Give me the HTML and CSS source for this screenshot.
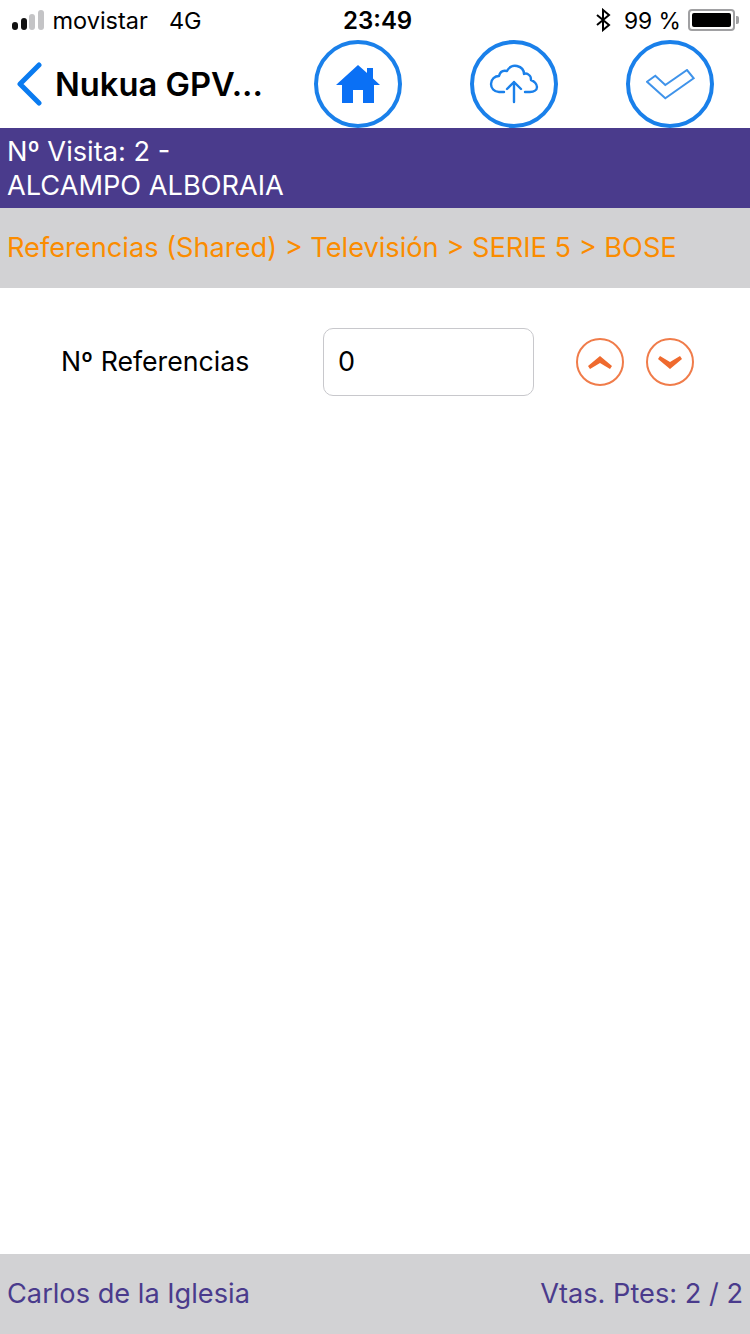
FILE: index.html
```html
<!DOCTYPE html>
<html lang="en">
<head>
  <meta charset="UTF-8" />
  <meta name="viewport" content="width=device-width, initial-scale=1.0"/>
  <title>Nukua GPV</title>
  <link rel="stylesheet" href="styles.css">
</head>
<body>
  <div class="status-bar">
    <div class="status-left">
      <span class="signal">
        <i class="on s1"></i><i class="on s2"></i><i class="s3"></i><i class="s4"></i>
      </span>
      <span class="carrier">movistar</span>
      <span class="network">4G</span>
    </div>
    <div class="clock">23:49</div>
    <div class="status-right">
      <svg class="bt" width="15" height="24" viewBox="0 0 15 24">
        <path d="M1 7l12 10-6 5V2l6 5L1 17" fill="none" stroke="#000" stroke-width="2"/>
      </svg>
      <span class="percent">99 %</span>
      <span class="battery"><span class="battery-fill"></span></span>
      <span class="battery-tip"></span>
    </div>
  </div>

  <header class="nav">
    <div class="nav-left">
      <svg class="back" width="26" height="44" viewBox="0 0 26 44">
        <path d="M23 3L4 22l19 19" fill="none" stroke="#0a7bf0" stroke-width="5" stroke-linecap="round" stroke-linejoin="round"/>
      </svg>
      <span class="nav-title">Nukua GPV...</span>
    </div>
    <div class="nav-icons">
      <div class="circle-btn">
        <svg width="46" height="40" viewBox="0 0 46 40">
          <path d="M23 1L1 21h6v18h11V26h10v13h11V21h6l-7-6.400V4h-6v5z" fill="#0a70f5"/>
        </svg>
      </div>
      <div class="circle-btn">
        <svg width="50" height="40" viewBox="0 0 50 40" fill="none" stroke="#1a80ea" stroke-width="2.400" stroke-linecap="round" stroke-linejoin="round">
          <path d="M15 28H10C5 28 2 24 2 20c0-5 4-8 8-8 1-4 4-6 8-5 2-4 6-6 10-5 4 1 7 4 7 8 2-1 4 0 5 1 2 1 2 3 2 5 3 1 6 4 6 7 0 3-3 5-7 5h-5"/>
          <path d="M25 38V18M18 25l7-7 7 7"/>
        </svg>
      </div>
      <div class="circle-btn">
        <svg width="49" height="31" viewBox="0 0 49 31" fill="none" stroke="#3f93ea" stroke-width="2">
          <path d="M1 12.700L9.300 6.700 19.300 16 41 1l6.700 8.300-28.400 20z"/>
        </svg>
      </div>
    </div>
  </header>

  <div class="visit-bar">
    <div>Nº Visita: 2 -</div>
    <div>ALCAMPO ALBORAIA</div>
  </div>

  <div class="crumb-bar">Referencias (Shared) &gt; Televisión &gt; SERIE 5 &gt; BOSE</div>

  <main class="main-content">
    <div class="field-row">
      <label class="field-label">Nº Referencias</label>
      <div class="field-input">0</div>
      <div class="stepper">
        <div class="step-btn">
          <svg width="24" height="15" viewBox="0 0 24 15"><path d="M12 1l12 10-2 3-10-6-10 6-2-3z" fill="#ef6a2e"/></svg>
        </div>
        <div class="step-btn">
          <svg width="24" height="15" viewBox="0 0 24 15"><path d="M12 14L24 4l-2-3-10 6L2 1 0 4z" fill="#ef6a2e"/></svg>
        </div>
      </div>
    </div>
  </main>

  <footer class="footer">
    <span>Carlos de la Iglesia</span>
    <span>Vtas. Ptes: 2 / 2</span>
  </footer>
</body>
</html>
```

FILE: styles.css
```css
html, body {
  height: 100%;
}

body {
  margin: 0;
  display: flex;
  flex-direction: column;
  height: 1334px;
  overflow: hidden;
  background: #fff;
  color: #000;
  font-family: Inter, "Liberation Sans", sans-serif;
}

.status-bar {
  height: 40px;
  flex: none;
  display: flex;
  align-items: center;
  justify-content: space-between;
  position: relative;
  padding: 0 11px 0 12px;
  font-size: 23.500px;
}

.status-left {
  display: flex;
  align-items: center;
}

.signal {
  display: flex;
  align-items: flex-end;
  gap: 2.500px;
  margin-right: 9px;
}

.signal i {
  display: block;
  width: 6px;
  border-radius: 3px;
  background: #c4c4c6;
}

.signal .on {
  background: #111;
}

.s1 { height: 8px; }
.s2 { height: 12px; }
.s3 { height: 16px; }
.s4 { height: 20px; }

.network {
  margin-left: 21px;
}

.clock {
  position: absolute;
  left: 343px;
  font-size: 24px;
  font-weight: 600;
}

.status-right {
  display: flex;
  align-items: center;
}

.percent {
  margin-left: 13px;
  font-size: 22.800px;
}

.battery {
  display: block;
  box-sizing: border-box;
  width: 47px;
  height: 22px;
  margin-left: 7px;
  padding: 2px;
  border: 2px solid #a0a0a2;
  border-radius: 4px;
}

.battery-fill {
  display: block;
  height: 100%;
  background: #000;
  border-radius: 2px;
}

.battery-tip {
  display: block;
  width: 3px;
  height: 8px;
  margin-left: 1px;
  background: #a0a0a2;
  border-radius: 0 2px 2px 0;
}

.nav {
  height: 88px;
  flex: none;
  display: flex;
  align-items: center;
  justify-content: space-between;
}

.nav-left {
  display: flex;
  align-items: center;
  padding-left: 16px;
}

.nav-title {
  margin-left: 13px;
  font-size: 32.700px;
  font-weight: 600;
}

.nav-icons {
  display: flex;
  gap: 68px;
  padding-right: 36px;
}

.circle-btn {
  box-sizing: border-box;
  width: 88px;
  height: 88px;
  border: 4px solid #1a80ea;
  border-radius: 50%;
  display: flex;
  align-items: center;
  justify-content: center;
}

.visit-bar {
  height: 80px;
  flex: none;
  box-sizing: border-box;
  padding: 7px 7px 0;
  background: #4a3b8c;
  color: #fff;
  font-size: 27.200px;
  line-height: 34px;
}

.crumb-bar {
  height: 80px;
  flex: none;
  box-sizing: border-box;
  display: flex;
  align-items: center;
  padding: 0 7px 2px;
  background: #d2d2d4;
  color: #fb8c00;
  font-size: 27.200px;
}

.main-content {
  flex: 1;
  padding-top: 40px;
  background: #fff;
}

.field-row {
  display: flex;
  align-items: center;
}

.field-label {
  flex: none;
  width: 323px;
  padding: 0 0 2px 61px;
  box-sizing: border-box;
  font-size: 26.700px;
}

.field-input {
  box-sizing: border-box;
  flex: none;
  width: 211px;
  height: 68px;
  padding: 0 0 2px 14px;
  display: flex;
  align-items: center;
  border: 1px solid #c8c8cc;
  border-radius: 10px;
  font-size: 27px;
}

.stepper {
  display: flex;
  gap: 22px;
  margin-left: 42px;
}

.step-btn {
  box-sizing: border-box;
  width: 48px;
  height: 48px;
  border: 2.500px solid #f07c4a;
  border-radius: 50%;
  display: flex;
  align-items: center;
  justify-content: center;
}

.footer {
  height: 80px;
  flex: none;
  box-sizing: border-box;
  display: flex;
  align-items: center;
  justify-content: space-between;
  padding: 0 7px 2px;
  background: #d2d2d4;
  color: #4a3b8c;
  font-size: 27.200px;
}
```
